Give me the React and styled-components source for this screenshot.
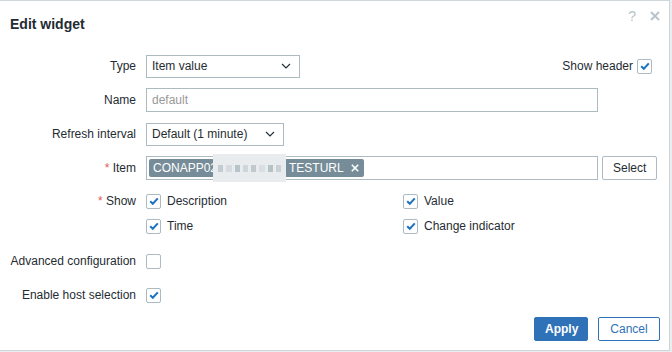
import { styled, createGlobalStyle } from "styled-components";

const GlobalStyle = createGlobalStyle`
  html, body {
    margin: 0;
    padding: 0;
    background: #ebeef0;
    font-family: "Liberation Sans", Arial, sans-serif;
    font-size: 12px;
    color: #1f2c33;
  }
`;

const CheckMark = () => (
  <svg width="12" height="12" viewBox="0 0 12 12">
    <path d="M2.2 6.2 L4.8 8.8 L9.8 3.4" fill="none" stroke="#1e73c0" strokeWidth="2" />
  </svg>
);

const Chevron = () => (
  <svg width="10" height="6" viewBox="0 0 10 6">
    <path d="M1 1 L5 5 L9 1" fill="none" stroke="#1f2c33" strokeWidth="1.1" />
  </svg>
);

const CloseIcon = ({ size = 10, color, width = 1.6 }) => (
  <svg width={size} height={size} viewBox="0 0 10 10">
    <path d="M1 1 L9 9 M9 1 L1 9" stroke={color} strokeWidth={width} />
  </svg>
);

function Checkbox({ checked }) {
  return <Box>{checked && <CheckMark />}</Box>;
}

export default function App() {
  return (
    <>
      <GlobalStyle />
      <Dialog>
        <Header>
          <Title>Edit widget</Title>
          <HeaderIcons>
            <span>?</span>
            <CloseIcon size={10} color="#b7c3c9" width={1.8} />
          </HeaderIcons>
        </Header>

        <Form>
          <Row>
            <Label>Type</Label>
            <Field>
              <Select $width={154}>
                Item value
                <Chevron />
              </Select>
              <ShowHeader>
                Show header
                <Checkbox checked />
              </ShowHeader>
            </Field>
          </Row>

          <Row>
            <Label>Name</Label>
            <Field>
              <Input $placeholder>default</Input>
            </Field>
          </Row>

          <Row>
            <Label>Refresh interval</Label>
            <Field>
              <Select $width={138}>
                Default (1 minute)
                <Chevron />
              </Select>
            </Field>
          </Row>

          <Row>
            <Label $required>Item</Label>
            <Field>
              <Input>
                <Chip>
                  <span>CONAPP02</span>
                  <Blur>
                    {["#c3ccd1", "#d5dbde", "#b9c4ca", "#cfd6da", "#bfc9ce", "#d8dee1", "#b7c2c8", "#c9d1d5"].map((c, i) => (
                      <i key={i} style={{ background: c }} />
                    ))}
                  </Blur>
                  <span>TESTURL</span>
                  <ChipClose>
                    <CloseIcon size={8} color="#fff" width={2} />
                  </ChipClose>
                </Chip>
              </Input>
              <Button>Select</Button>
            </Field>
          </Row>

          <ShowRow>
            <Label $required>Show</Label>
            <ShowGrid>
              <Check><Checkbox checked />Description</Check>
              <Check><Checkbox checked />Value</Check>
              <Check><Checkbox checked />Time</Check>
              <Check><Checkbox checked />Change indicator</Check>
            </ShowGrid>
          </ShowRow>

          <Row>
            <Label>Advanced configuration</Label>
            <Field>
              <Checkbox />
            </Field>
          </Row>

          <Row>
            <Label>Enable host selection</Label>
            <Field>
              <Checkbox checked />
            </Field>
          </Row>
        </Form>

        <Footer>
          <Button $primary>Apply</Button>
          <Button $outline>Cancel</Button>
        </Footer>
      </Dialog>
    </>
  );
}

const Dialog = styled.div`
  box-sizing: border-box;
  width: 670px;
  height: 351px;
  background: #fff;
  border: 1px solid #cfd6da;
  border-left: none;
  display: flex;
  flex-direction: column;
`;

const Header = styled.div`
  display: flex;
  justify-content: space-between;
  align-items: flex-start;
  padding: 12px 9px 0 10px;
  height: 28px;
`;

const Title = styled.h4`
  margin: 3px 0 0;
  font-size: 14px;
  font-weight: bold;
  color: #1f2c33;
`;

const HeaderIcons = styled.div`
  display: flex;
  align-items: center;
  gap: 14px;
  color: #b7c3c9;
  font-size: 14px;
  margin-top: -5px;
`;

const Form = styled.div`
  display: flex;
  flex-direction: column;
  gap: 10px;
  padding: 13px 11px 0 10px;
`;

const Row = styled.div`
  display: grid;
  grid-template-columns: 126px 1fr;
  column-gap: 10px;
  align-items: center;
  min-height: 24px;
`;

const ShowRow = styled(Row)`
  align-items: start;
  margin-top: -1px;
  margin-bottom: 1px;

  label {
    line-height: 24px;
  }
`;

const Label = styled.label`
  text-align: right;
  white-space: nowrap;
  line-height: 14px;

  &::before {
    content: ${(p) => (p.$required ? '"* "' : "none")};
    color: #e45959;
  }
`;

const Field = styled.div`
  display: flex;
  align-items: center;
  gap: 4px;
`;

const Select = styled.div`
  box-sizing: border-box;
  width: ${(p) => p.$width}px;
  height: 23px;
  border: 1px solid #acbbc2;
  padding: 0 8px 0 5px;
  display: flex;
  align-items: center;
  justify-content: space-between;
`;

const Input = styled.div`
  box-sizing: border-box;
  width: 452px;
  height: 24px;
  border: 1px solid #acbbc2;
  padding: 0 2px 0 5px;
  display: flex;
  align-items: center;
  color: ${(p) => (p.$placeholder ? "#999" : "#1f2c33")};
`;

const ShowHeader = styled.div`
  margin-left: auto;
  margin-right: 6px;
  display: flex;
  align-items: center;
  gap: 4px;
`;

const Chip = styled.div`
  margin-left: -3px;
  height: 18px;
  background: #768d99;
  color: #fff;
  display: flex;
  align-items: center;
  padding: 0 5px 0 4px;
  border-radius: 2px;
  font-size: 12px;
`;

const Blur = styled.span`
  display: flex;
  align-items: center;
  gap: 3px;
  width: 73px;
  height: 28px;
  margin: 0 3px 0 -4px;
  background: #e9ecee;
  padding: 0 5px;
  box-sizing: border-box;

  i {
    display: block;
    width: 6px;
    height: 7px;
  }
`;

const ChipClose = styled.span`
  margin-left: 7px;
  display: flex;
  align-items: center;
`;

const Button = styled.button`
  box-sizing: border-box;
  height: 24px;
  padding: 0 10px;
  font-family: inherit;
  font-size: 12px;
  border-radius: 2px;
  cursor: pointer;
  background: ${(p) => (p.$primary ? "#2f72b8" : "#fff")};
  color: ${(p) => (p.$primary ? "#fff" : p.$outline ? "#2f72b8" : "#1f2c33")};
  font-weight: ${(p) => (p.$primary ? "bold" : "normal")};
  border: 1px solid ${(p) => (p.$primary || p.$outline ? "#2f72b8" : "#acbbc2")};
`;

const ShowGrid = styled.div`
  display: grid;
  grid-template-columns: 257px 1fr;
  grid-auto-rows: 24px;
  row-gap: 1px;
`;

const Check = styled.div`
  display: flex;
  align-items: center;
  gap: 6px;
`;

const Box = styled.span`
  box-sizing: border-box;
  width: 15px;
  height: 15px;
  border: 1px solid #acbbc2;
  border-radius: 2px;
  display: inline-flex;
  align-items: center;
  justify-content: center;
  background: #fff;
`;

const Footer = styled.div`
  margin-top: auto;
  display: flex;
  justify-content: flex-end;
  gap: 10px;
  padding: 0 9px 9px 0;

  button:first-child {
    width: 54px;
  }
  button:last-child {
    width: 62px;
  }
`;
